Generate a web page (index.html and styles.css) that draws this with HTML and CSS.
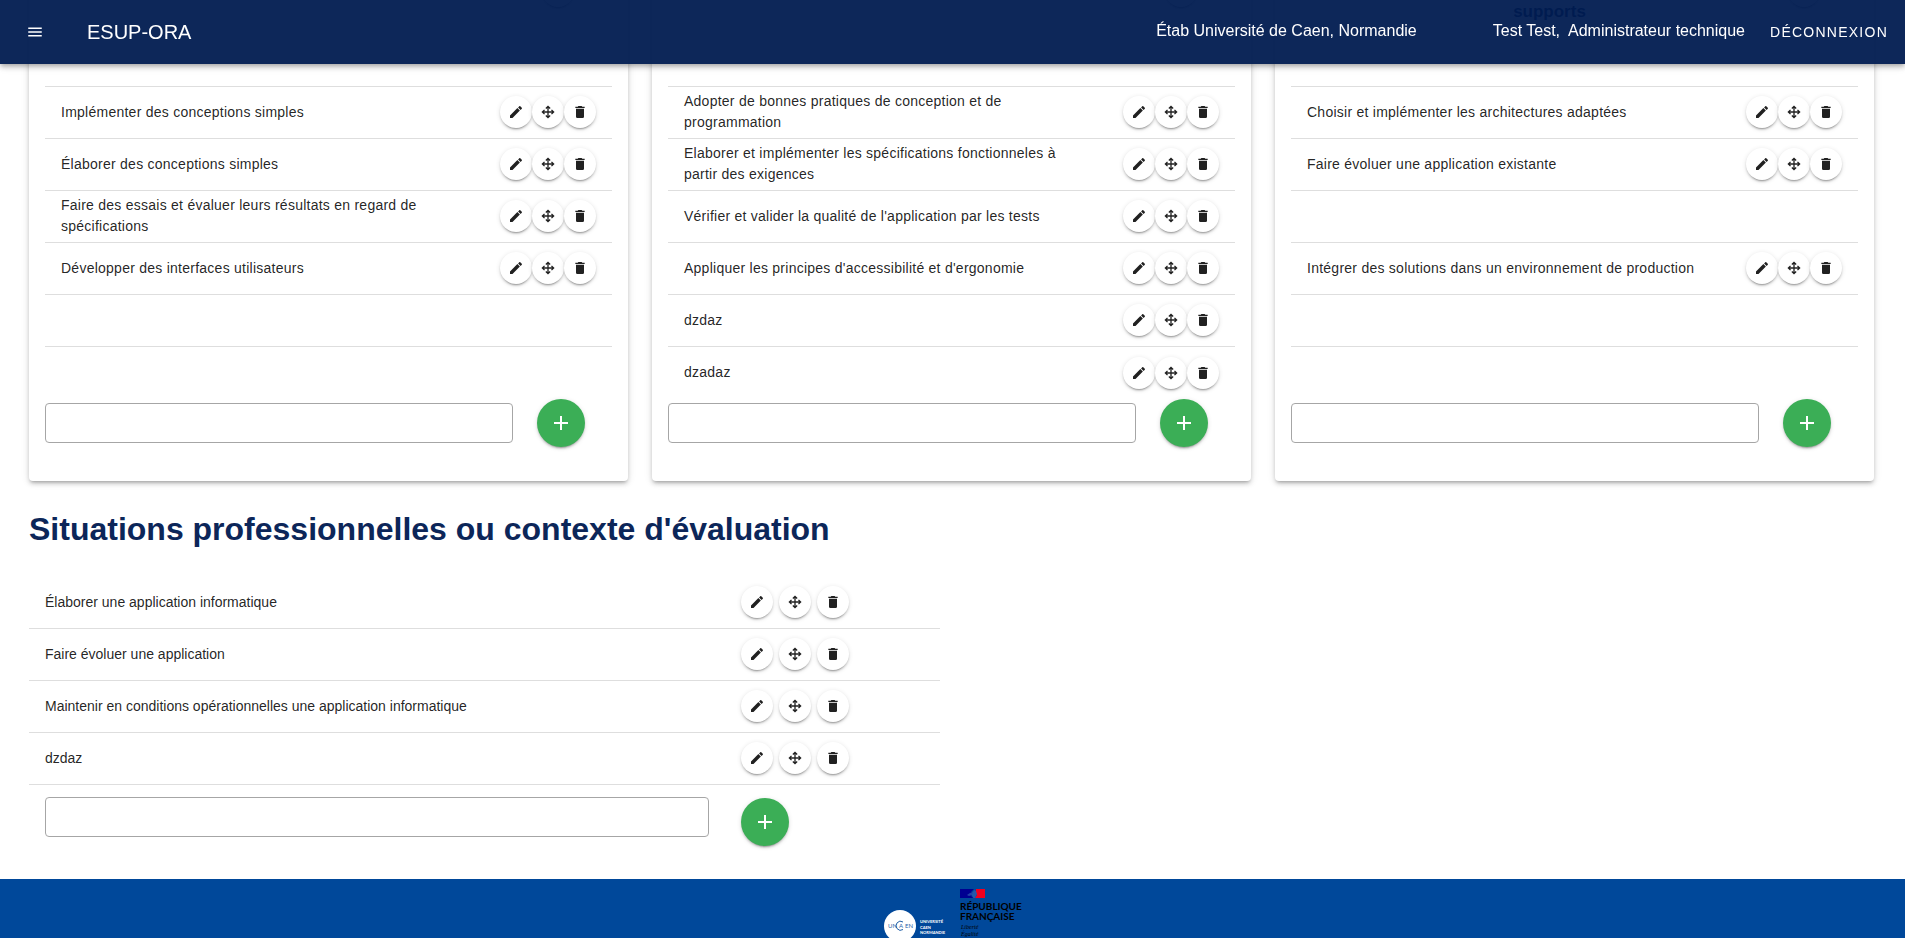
FILE: index.html
```html
<!DOCTYPE html>
<html lang="fr">
<head>
<meta charset="utf-8">
<title>ESUP-ORA</title>
<link rel="stylesheet" href="styles.css">
</head>
<body>
<svg class="sprite" aria-hidden="true">
  <symbol id="i-menu" viewBox="0 0 24 24"><path d="M3,6H21V8H3V6M3,11H21V13H3V11M3,16H21V18H3V16Z"/></symbol>
  <symbol id="i-edit" viewBox="0 0 24 24"><path d="M20.71,7.04C21.1,6.65 21.1,6 20.71,5.63L18.37,3.29C18,2.9 17.35,2.9 16.96,3.29L15.12,5.12L18.87,8.87M3,17.25V21H6.75L17.81,9.93L14.06,6.18L3,17.25Z"/></symbol>
  <symbol id="i-move" viewBox="0 0 24 24"><path d="M13,11H18L16.5,9.5L17.92,8.08L21.84,12L17.92,15.92L16.5,14.5L18,13H13V18L14.5,16.5L15.92,17.92L12,21.84L8.08,17.92L9.5,16.5L11,18V13H6L7.5,14.5L6.08,15.92L2.16,12L6.08,8.08L7.5,9.5L6,11H11V6L9.5,7.5L8.08,6.08L12,2.16L15.92,6.08L14.5,7.5L13,6V11Z"/></symbol>
  <symbol id="i-delete" viewBox="0 0 24 24"><path d="M19,4H15.5L14.5,3H9.5L8.5,4H5V6H19M6,19A2,2 0 0,0 8,21H16A2,2 0 0,0 18,19V7H6V19Z"/></symbol>
  <symbol id="i-plus" viewBox="0 0 24 24"><path d="M19,13H13V19H11V13H5V11H11V5H13V11H19V13Z"/></symbol>
</svg>

<header class="app-bar">
  <button class="menu-btn" type="button" aria-label="Menu"><svg><use href="#i-menu"/></svg></button>
  <div class="brand">ESUP-ORA</div>
  <div class="etab">Étab Université de Caen, Normandie</div>
  <div class="user">Test Test,&nbsp; Administrateur technique</div>
  <button class="logout" type="button">Déconnexion</button>
</header>

<main class="page">
  <div class="cards">
    <section class="card">
      <div class="card-head"><h3></h3><button class="round" type="button" aria-label="Modifier"></button></div>
      <ul class="rows">
        <li><span class="label">Implémenter des conceptions simples</span><span class="actions"><button class="round" type="button" aria-label="Modifier"><svg><use href="#i-edit"/></svg></button><button class="round" type="button" aria-label="Déplacer"><svg><use href="#i-move"/></svg></button><button class="round" type="button" aria-label="Supprimer"><svg><use href="#i-delete"/></svg></button></span></li>
        <li><span class="label">Élaborer des conceptions simples</span><span class="actions"><button class="round" type="button" aria-label="Modifier"><svg><use href="#i-edit"/></svg></button><button class="round" type="button" aria-label="Déplacer"><svg><use href="#i-move"/></svg></button><button class="round" type="button" aria-label="Supprimer"><svg><use href="#i-delete"/></svg></button></span></li>
        <li><span class="label">Faire des essais et évaluer leurs résultats en regard de spécifications</span><span class="actions"><button class="round" type="button" aria-label="Modifier"><svg><use href="#i-edit"/></svg></button><button class="round" type="button" aria-label="Déplacer"><svg><use href="#i-move"/></svg></button><button class="round" type="button" aria-label="Supprimer"><svg><use href="#i-delete"/></svg></button></span></li>
        <li><span class="label">Développer des interfaces utilisateurs</span><span class="actions"><button class="round" type="button" aria-label="Modifier"><svg><use href="#i-edit"/></svg></button><button class="round" type="button" aria-label="Déplacer"><svg><use href="#i-move"/></svg></button><button class="round" type="button" aria-label="Supprimer"><svg><use href="#i-delete"/></svg></button></span></li>
        <li></li>
        <li></li>
      </ul>
      <form class="add"><input type="text" aria-label="Nouvel apprentissage niveau 1"><button class="plus" type="button" aria-label="Ajouter"><svg><use href="#i-plus"/></svg></button></form>
    </section>

    <section class="card">
      <div class="card-head"><h3></h3><button class="round" type="button" aria-label="Modifier"></button></div>
      <ul class="rows">
        <li><span class="label">Adopter de bonnes pratiques de conception et de programmation</span><span class="actions"><button class="round" type="button" aria-label="Modifier"><svg><use href="#i-edit"/></svg></button><button class="round" type="button" aria-label="Déplacer"><svg><use href="#i-move"/></svg></button><button class="round" type="button" aria-label="Supprimer"><svg><use href="#i-delete"/></svg></button></span></li>
        <li><span class="label">Elaborer et implémenter les spécifications fonctionneles à partir des exigences</span><span class="actions"><button class="round" type="button" aria-label="Modifier"><svg><use href="#i-edit"/></svg></button><button class="round" type="button" aria-label="Déplacer"><svg><use href="#i-move"/></svg></button><button class="round" type="button" aria-label="Supprimer"><svg><use href="#i-delete"/></svg></button></span></li>
        <li><span class="label">Vérifier et valider la qualité de l'application par les tests</span><span class="actions"><button class="round" type="button" aria-label="Modifier"><svg><use href="#i-edit"/></svg></button><button class="round" type="button" aria-label="Déplacer"><svg><use href="#i-move"/></svg></button><button class="round" type="button" aria-label="Supprimer"><svg><use href="#i-delete"/></svg></button></span></li>
        <li><span class="label">Appliquer les principes d'accessibilité et d'ergonomie</span><span class="actions"><button class="round" type="button" aria-label="Modifier"><svg><use href="#i-edit"/></svg></button><button class="round" type="button" aria-label="Déplacer"><svg><use href="#i-move"/></svg></button><button class="round" type="button" aria-label="Supprimer"><svg><use href="#i-delete"/></svg></button></span></li>
        <li><span class="label">dzdaz</span><span class="actions"><button class="round" type="button" aria-label="Modifier"><svg><use href="#i-edit"/></svg></button><button class="round" type="button" aria-label="Déplacer"><svg><use href="#i-move"/></svg></button><button class="round" type="button" aria-label="Supprimer"><svg><use href="#i-delete"/></svg></button></span></li>
        <li><span class="label">dzadaz</span><span class="actions"><button class="round" type="button" aria-label="Modifier"><svg><use href="#i-edit"/></svg></button><button class="round" type="button" aria-label="Déplacer"><svg><use href="#i-move"/></svg></button><button class="round" type="button" aria-label="Supprimer"><svg><use href="#i-delete"/></svg></button></span></li>
      </ul>
      <form class="add"><input type="text" aria-label="Nouvel apprentissage niveau 2"><button class="plus" type="button" aria-label="Ajouter"><svg><use href="#i-plus"/></svg></button></form>
    </section>

    <section class="card">
      <div class="card-head"><h3>supports</h3><button class="round" type="button" aria-label="Modifier"></button></div>
      <ul class="rows">
        <li><span class="label">Choisir et implémenter les architectures adaptées</span><span class="actions"><button class="round" type="button" aria-label="Modifier"><svg><use href="#i-edit"/></svg></button><button class="round" type="button" aria-label="Déplacer"><svg><use href="#i-move"/></svg></button><button class="round" type="button" aria-label="Supprimer"><svg><use href="#i-delete"/></svg></button></span></li>
        <li><span class="label">Faire évoluer une application existante</span><span class="actions"><button class="round" type="button" aria-label="Modifier"><svg><use href="#i-edit"/></svg></button><button class="round" type="button" aria-label="Déplacer"><svg><use href="#i-move"/></svg></button><button class="round" type="button" aria-label="Supprimer"><svg><use href="#i-delete"/></svg></button></span></li>
        <li></li>
        <li><span class="label">Intégrer des solutions dans un environnement de production</span><span class="actions"><button class="round" type="button" aria-label="Modifier"><svg><use href="#i-edit"/></svg></button><button class="round" type="button" aria-label="Déplacer"><svg><use href="#i-move"/></svg></button><button class="round" type="button" aria-label="Supprimer"><svg><use href="#i-delete"/></svg></button></span></li>
        <li></li>
        <li></li>
      </ul>
      <form class="add"><input type="text" aria-label="Nouvel apprentissage niveau 3"><button class="plus" type="button" aria-label="Ajouter"><svg><use href="#i-plus"/></svg></button></form>
    </section>
  </div>

  <h2 class="title">Situations professionnelles ou contexte d'évaluation</h2>

  <section class="situations">
    <ul>
      <li><span>Élaborer une application informatique</span><span class="actions"><button class="round" type="button" aria-label="Modifier"><svg><use href="#i-edit"/></svg></button><button class="round" type="button" aria-label="Déplacer"><svg><use href="#i-move"/></svg></button><button class="round" type="button" aria-label="Supprimer"><svg><use href="#i-delete"/></svg></button></span></li>
      <li><span>Faire évoluer une application</span><span class="actions"><button class="round" type="button" aria-label="Modifier"><svg><use href="#i-edit"/></svg></button><button class="round" type="button" aria-label="Déplacer"><svg><use href="#i-move"/></svg></button><button class="round" type="button" aria-label="Supprimer"><svg><use href="#i-delete"/></svg></button></span></li>
      <li><span>Maintenir en conditions opérationnelles une application informatique</span><span class="actions"><button class="round" type="button" aria-label="Modifier"><svg><use href="#i-edit"/></svg></button><button class="round" type="button" aria-label="Déplacer"><svg><use href="#i-move"/></svg></button><button class="round" type="button" aria-label="Supprimer"><svg><use href="#i-delete"/></svg></button></span></li>
      <li><span>dzdaz</span><span class="actions"><button class="round" type="button" aria-label="Modifier"><svg><use href="#i-edit"/></svg></button><button class="round" type="button" aria-label="Déplacer"><svg><use href="#i-move"/></svg></button><button class="round" type="button" aria-label="Supprimer"><svg><use href="#i-delete"/></svg></button></span></li>
    </ul>
    <form class="add-situation"><input type="text" aria-label="Nouvelle situation professionnelle"><button class="plus" type="button" aria-label="Ajouter"><svg><use href="#i-plus"/></svg></button></form>
  </section>
</main>

<footer class="footer">
  <svg class="unicaen" viewBox="0 0 62 34" role="img" aria-label="Unicaen">
    <circle cx="16" cy="16" r="16" fill="#fff"/>
    <g class="unicaen-mark">
      <text x="4" y="18">UN</text><text x="15" y="18">A</text><text x="21" y="18">EN</text>
      <path d="M19 12A4.500 4.500 0 1 0 19 19.500"/>
    </g>
    <g class="unicaen-text"><text x="36" y="13">UNIVERSITÉ</text><text x="36" y="19">CAEN</text><text x="36" y="24">NORMANDIE</text></g>
  </svg>
  <svg class="rf" viewBox="0 0 62 49" role="img" aria-label="République Française">
    <path fill="#000091" d="M0 0H14L11 3L13 4L11 7L14 9H0Z"/>
    <path fill="#f0001e" d="M16 0H25V9H15L17 6L16 3Z"/>
    <path fill="#2f5fb0" d="M7 6L10 4L13 3L14 1L16 2L17 5L15 9H13L12 6L9 7Z" opacity=".7"/>
    <g class="rf-name"><text x="0" y="21">RÉPUBLIQUE</text><text x="0" y="31">FRANÇAISE</text></g>
    <g class="rf-motto"><text x="1" y="40">Liberté</text><text x="1" y="47">Égalité</text></g>
  </svg>
</footer>
</body>
</html>
```
FILE: styles.css
```css
* { box-sizing: border-box; }

body {
  margin: 0;
  height: 100vh;
  overflow: hidden;
  display: flex;
  flex-direction: column;
  background: #fff;
  color: rgba(0, 0, 0, .87);
  font-family: "Liberation Sans", Arial, sans-serif;
  font-size: 14px;
  line-height: 21px;
}

ul { list-style: none; margin: 0; padding: 0; }
h2, h3 { margin: 0; }
button { font: inherit; color: inherit; border: 0; padding: 0; cursor: pointer; }
svg { fill: currentColor; display: block; }
.sprite { position: absolute; width: 0; height: 0; }

.app-bar {
  position: fixed;
  top: 0;
  left: 0;
  right: 0;
  z-index: 5;
  height: 64px;
  padding: 0 17px;
  display: flex;
  align-items: center;
  background: rgba(0, 27, 80, .95);
  color: #fff;
  font-size: 16px;
  box-shadow: 0 2px 4px -1px rgba(0, 0, 0, .2), 0 4px 5px 0 rgba(0, 0, 0, .14), 0 1px 10px 0 rgba(0, 0, 0, .12);
}
.menu-btn { width: 36px; height: 36px; display: grid; place-items: center; background: none; }
.menu-btn svg { width: 18px; height: 18px; }
.brand { margin-left: 34px; margin-right: auto; font-size: 20px; }
.etab, .user { padding-bottom: 3px; }
.user { margin: 0 25px 0 76px; }
.logout { background: none; font-size: 14px; letter-spacing: 1.25px; text-transform: uppercase; }

.page { flex: none; margin-top: -28px; padding: 0 31px 33px 29px; }
.cards { display: grid; grid-template-columns: repeat(3, 1fr); gap: 24px; }
.card {
  padding: 0 16px 34px;
  border-radius: 4px;
  background: #fff;
  box-shadow: 0 3px 3px -2px rgba(0, 0, 0, .2), 0 3px 4px 0 rgba(0, 0, 0, .14), 0 1px 8px 0 rgba(0, 0, 0, .12);
}
.card-head {
  height: 115px;
  padding: 3px 38px 0 0;
  display: flex;
  border-bottom: 1px solid #dedede;
}
.card-head h3 { flex: 1; padding: 26px 0 0 20px; text-align: center; font-size: 17px; color: #001b50; }

.rows li {
  height: 52px;
  padding: 0 16px 1px;
  display: flex;
  align-items: center;
  border-bottom: 1px solid #dedede;
}
.rows li:last-child { border-bottom: 0; }
.label { flex: 1; padding-right: 32px; letter-spacing: .25px; }
.actions { display: flex; }

.round {
  width: 32px;
  height: 32px;
  border-radius: 50%;
  display: grid;
  place-items: center;
  background: #fff;
  box-shadow: 0 3px 1px -2px rgba(0, 0, 0, .2), 0 2px 2px 0 rgba(0, 0, 0, .14), 0 1px 5px 0 rgba(0, 0, 0, .12);
}
.round svg { width: 16px; height: 16px; }

input {
  height: 40px;
  min-width: 0;
  padding: 0 12px;
  border: 1px solid #a6a6a6;
  border-radius: 4px;
  background: #fff;
  font: inherit;
}
.plus {
  width: 48px;
  height: 48px;
  border-radius: 50%;
  display: grid;
  place-items: center;
  background: #3bae56;
  color: #fff;
  box-shadow: 0 3px 1px -2px rgba(0, 0, 0, .2), 0 2px 2px 0 rgba(0, 0, 0, .14), 0 1px 5px 0 rgba(0, 0, 0, .12);
}
.plus svg { width: 24px; height: 24px; }
.add { display: flex; align-items: center; gap: 24px; padding-right: 27px; }
.add input { flex: 1; }

.title { margin: 28px 0; font-size: 32px; line-height: 40px; color: #0c2659; }

.situations { width: calc(50% - 12px); }
.situations li {
  height: 52px;
  display: grid;
  grid-template-columns: 1fr 199px;
  align-items: center;
  padding: 0 0 1px 16px;
  border-bottom: 1px solid #dedede;
}
.situations .actions { gap: 6px; }
.add-situation {
  display: grid;
  grid-template-columns: 1fr 199px;
  padding: 12px 0 0 16px;
}
.add-situation input { margin-right: 32px; }
.add-situation .plus { margin-top: 1px; }

.footer {
  flex: 1;
  min-height: 0;
  overflow: hidden;
  display: flex;
  justify-content: center;
  align-items: flex-start;
  gap: 14px;
  padding-top: 10px;
  background: #00489a;
}
.unicaen { width: 62px; height: 34px; margin-top: 21px; }
.unicaen-mark text { fill: #1f5fa8; font: 6px Lato, sans-serif; }
.unicaen-mark path { fill: none; stroke: #1f5fa8; stroke-width: 1; }
.unicaen-text { fill: #fff; font: bold 4px Lato, sans-serif; }
.rf { width: 62px; height: 49px; }
.rf-name { fill: #000; font: bold 10px Lato, sans-serif; }
.rf-motto { fill: #000; font: italic 6px "Liberation Serif", serif; }
```
